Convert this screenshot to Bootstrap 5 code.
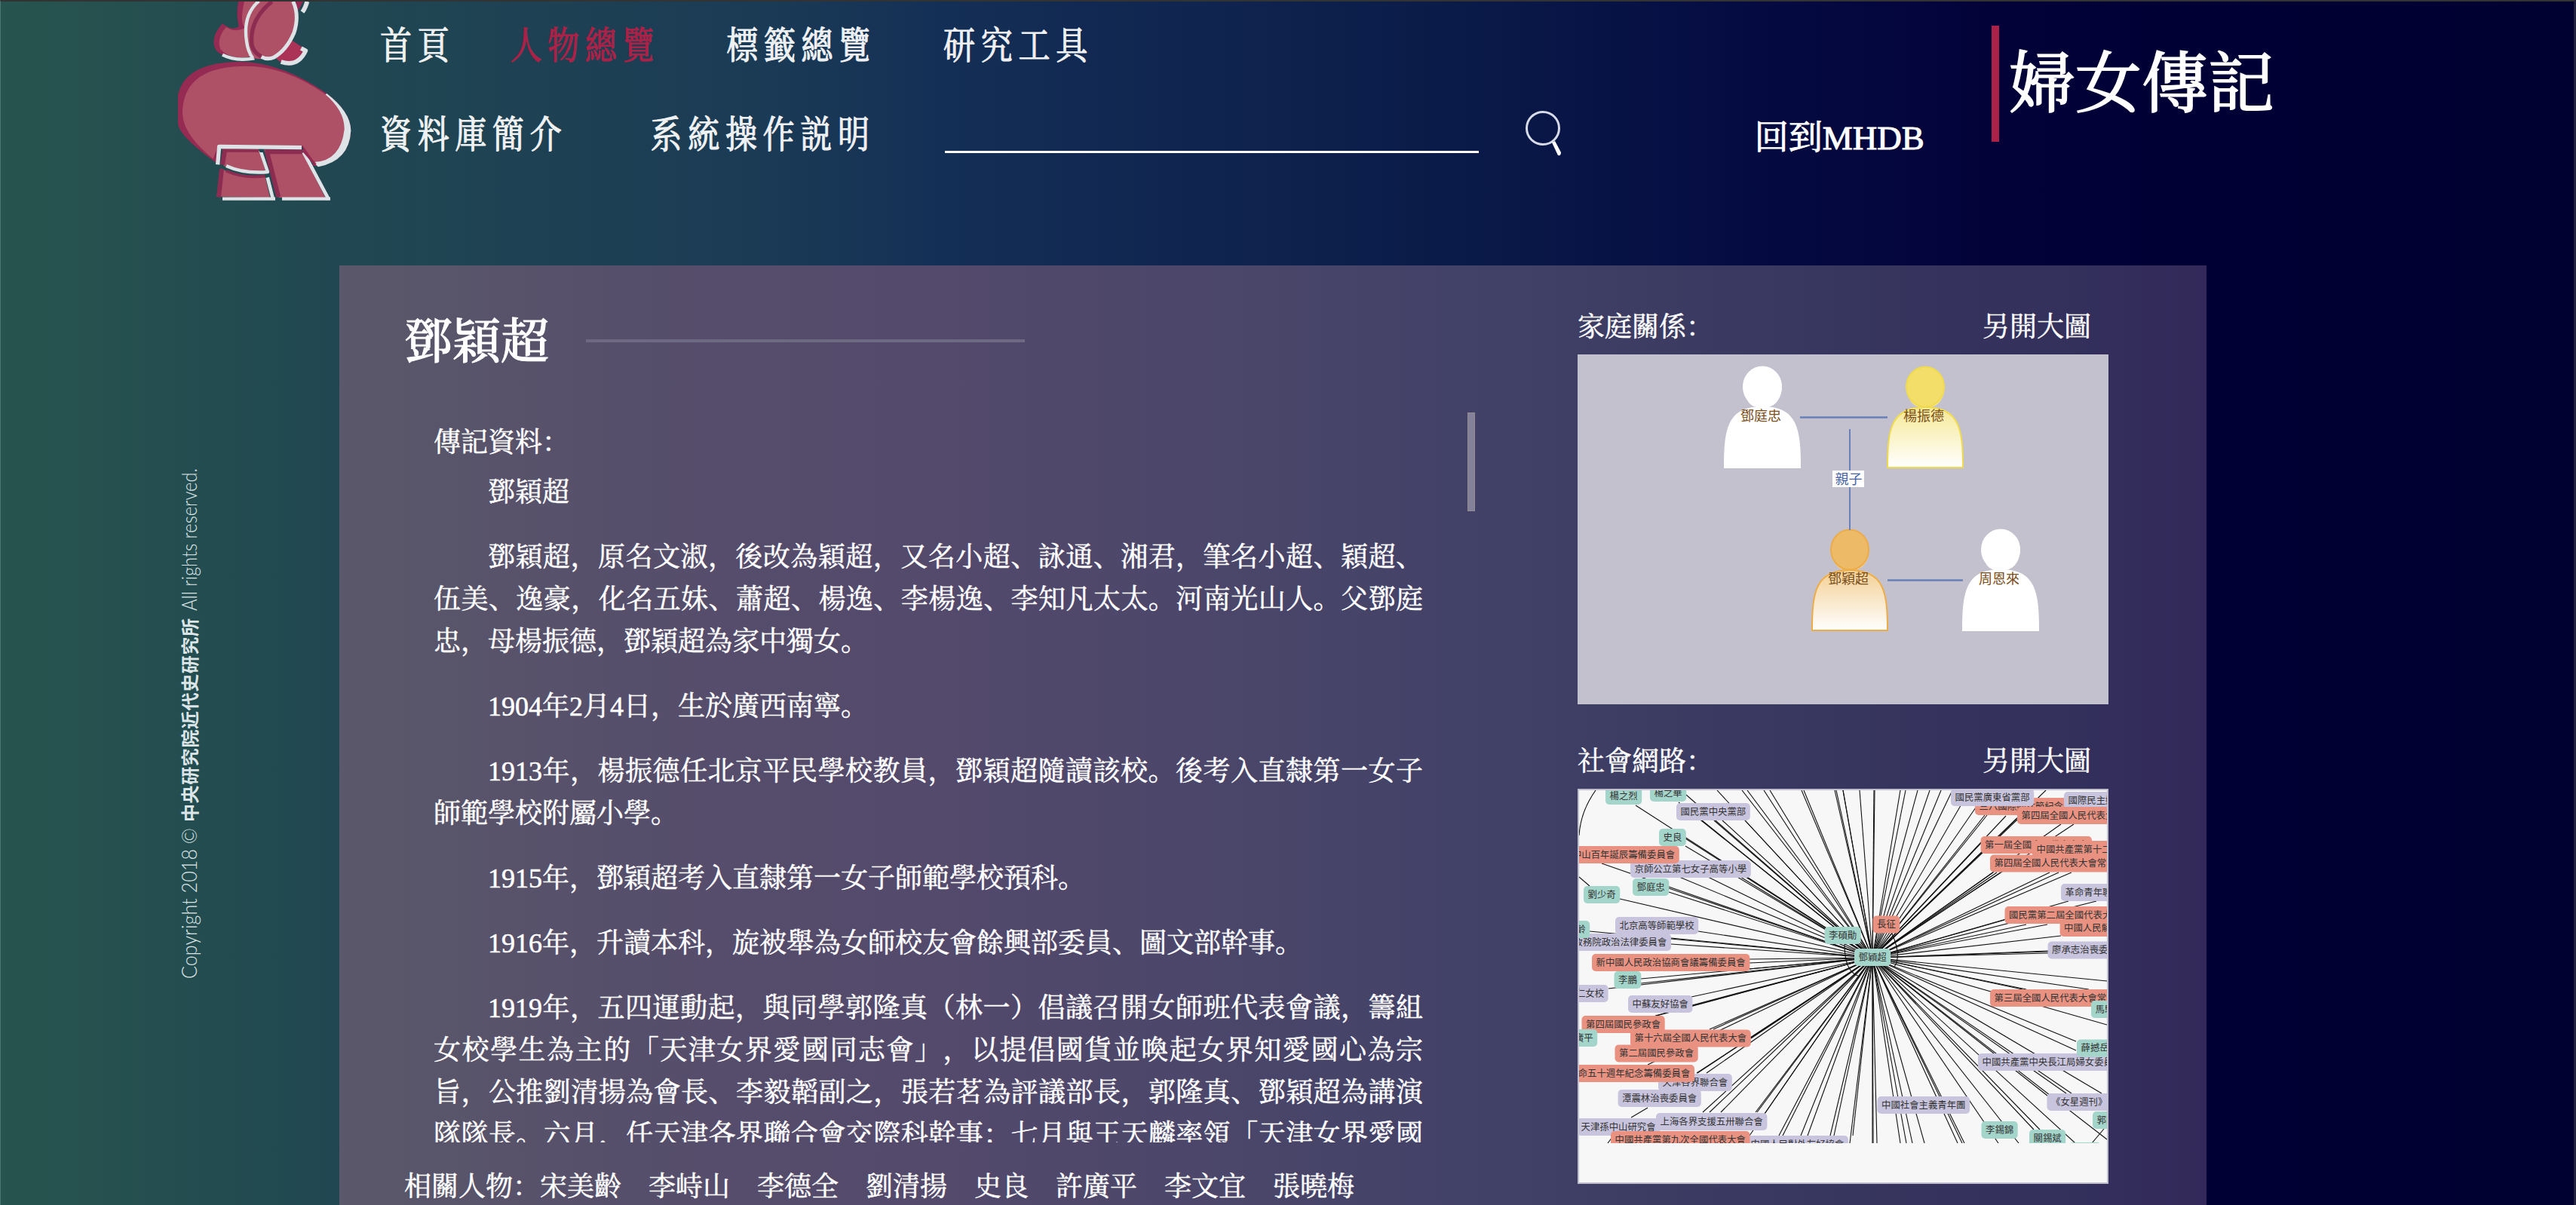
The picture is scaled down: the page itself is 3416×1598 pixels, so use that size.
<!doctype html>
<html lang="zh-Hans">
<head>
  <meta charset="UTF-8">
  <meta content="width=device-width, initial-scale=1" name="viewport">
  <link href="https://cdn.jsdelivr.net/npm/bootstrap@5.3.0/dist/css/bootstrap.min.css" rel="stylesheet">
  <script src="https://cdn.jsdelivr.net/npm/bootstrap@5.3.0/dist/js/bootstrap.bundle.min.js"></script>
  <title>婦女傳記 - 鄧穎超</title>
  <style>
    body {
      width: 3416px;
      height: 1598px;
      font-family: "Liberation Serif", "Noto Serif CJK SC", "Noto Sans CJK SC", serif;
      font-size: 36px;
      line-height: 56px;
      color: #fff;
      -webkit-text-stroke: .5px;
      text-spacing-trim: space-all;
      background: linear-gradient(90deg, #27544e 0, #204652 500px, #1b3b55 1000px, #142f56 1250px, #102650 1550px, #0a1a48 1950px, #050c42 2300px, #020138 2680px, #000030 3416px);
      border-top: 2px solid #333;
      border-left: 1px solid #4d7673;
      border-right: 3px solid #23233f;
    }
    a { color: inherit; text-decoration: none; }
    .site-header { height: 350px; }
    .site-logo { width: 300px; height: 288px; margin-left: 199px; }
    .menu-row { height: 72px; }
    .menu-row .nav-link {
      padding: 0;
      font-size: 42px;
      letter-spacing: 7.7px;
      color: #fff;
      opacity: .93;
      transform: scaleY(1.2);
      -webkit-text-stroke: 1px;
    }
    .menu-row .nav-link.active { color: #ab2147; opacity: 1; }
    .search-box {
      width: 708px;
      height: 48px;
      background: none;
      border: 0;
      border-bottom: 3px solid #fff;
      border-radius: 0;
    }
    .mhdb-link { font-size: 45px; -webkit-text-stroke: 1px; }
    .brand-name {
      height: 154px;
      margin-top: 32px;
      border-left: 10px solid #ab2147;
      padding-left: 13px;
      font-size: 88px;
      line-height: 156px;
      -webkit-text-stroke: 1.8px;
    }
    .side-rail { width: 449px; }
    .panel-main {
      width: 2476px;
      height: 1246px;
      background: linear-gradient(90deg, #5a586a 0, #564f6b 380px, #544a6c 750px, #4a466a 1200px, #3f3f66 1620px, #38375f 1950px, #33305c 2300px, #33295a 2476px);
    }
    .person-name { font-size: 64px; line-height: 96px; padding-top: 4px; -webkit-text-stroke: 1px; }
    .name-rule { width: 582px; height: 4px; background: #6f6a84; }
    .bio-scroll { height: 968px; width: 1381px; }
    .bio-text { width: 1312px; text-align: justify; }
    .bio-text p { text-indent: 2em; margin-bottom: 30px; }
    .bio-thumb { width: 10px; height: 131px; background: #84829a; border: 1px solid #938d90; }
    .graph-col { width: 704px; }
    .graph-title { padding-right: 23px; height: 60px; line-height: 66px; }
    .family-box { height: 464px; background: #c4c1cf; }
    .network-box { height: 524px; background: #f7f7f7; border: 2px solid #c1bfcd; }
    svg text { font-family: "Noto Sans CJK TC", sans-serif; -webkit-text-stroke: 0; }
    .copyright-latin { font-family: Lato, sans-serif; font-size: 28px; font-weight: 300; }
  </style>
</head>
<body class="overflow-hidden">
  <header class="site-header d-flex align-items-start">
    <!-- Logo -->
    <svg class="site-logo flex-shrink-0" viewBox="0 6 900 864">
      <g stroke-linejoin="round">
        <path d="M348 6Q338 60 350 105Q325 125 285 94Q250 130 250 170Q252 205 285 218L395 215L440 6Z" fill="#952b52"/>
        <path d="M372 6Q352 90 375 110Q340 132 300 108Q262 150 276 195Q300 224 350 230L410 225L470 6Z" fill="#ae5066"/>
        <path d="M285 218Q335 245 412 232" fill="none" stroke="#dde3e6" stroke-width="13"/>
        <path d="M560 160L618 198Q590 262 545 260Q515 250 498 232Z" fill="#ab3358"/>
        <path d="M598 192L616 202Q585 268 518 246" fill="none" stroke="#dde3e6" stroke-width="17"/>
        <path d="M575 6L606 6L586 42Z" fill="#952b52"/>
        <path d="M622 6Q614 34 603 48" fill="none" stroke="#dde3e6" stroke-width="18"/>
        <path d="M432 6Q356 80 386 185Q398 218 410 232Q455 240 500 225Q560 180 580 90Q583 40 570 6Z" fill="#ae5066"/>
        <path d="M482 6Q390 80 402 180Q410 210 440 225" fill="none" stroke="#8d2c51" stroke-width="16"/>
        <path d="M430 4Q365 60 381 165Q386 205 406 232" fill="none" stroke="#dde3e6" stroke-width="13"/>
        <path d="M566 6Q592 60 570 130Q540 200 490 228Q465 240 440 226" fill="none" stroke="#dde3e6" stroke-width="15"/>
        <path d="M108 375Q140 245 360 246Q520 248 700 372Q795 445 796 520Q790 640 666 660L270 655Q108 540 108 490Z" fill="#952b52"/>
        <path d="M700 372Q795 445 796 520Q790 640 666 664L640 640L690 380Z" fill="#dde3e6"/>
        <path d="M126 440Q135 265 370 263Q530 260 690 372Q772 440 770 515Q755 640 650 645L605 580L268 578L248 632Q120 530 126 440Z" fill="#ae5066"/>
        <path d="M272 583H600L650 655H262Z" fill="#21474f"/>
        <path d="M284 592L430 592L455 678Q370 695 290 660Z" fill="#ae5066"/>
        <path d="M280 670L262 782L474 786L455 705Q350 712 280 670Z" fill="#ae5066"/>
        <path d="M295 594L285 655M282 672L270 784" stroke="#8d2c51" stroke-width="18"/>
        <path d="M288 600L430 600M300 680Q370 712 455 700" fill="none" stroke="#8d2c51" stroke-width="11"/>
        <path d="M300 660Q370 692 465 684L436 598" fill="none" stroke="#dde3e6" stroke-width="13"/>
        <path d="M450 595L600 600L695 788L510 786Z" fill="#ae5066"/>
        <path d="M455 604H602M461 600L508 784" fill="none" stroke="#8d2c51" stroke-width="18"/>
        <path d="M464 706L486 792M608 606L708 794" stroke="#dde3e6" stroke-width="14"/>
        <path d="M604 596L655 655" stroke="#952b52" stroke-width="10"/>
        <path d="M266 655L272 583L600 587" fill="none" stroke="#dde3e6" stroke-width="16"/>
        <path d="M285 791H495M522 791H714" stroke="#dde3e6" stroke-width="13"/>
        <path d="M428 594H450L446 606H434Z" fill="#21434e"/>
      </g>
    </svg>
    <!-- Navigation -->
    <div class="d-flex flex-column ms-1" style="width: 2137px; padding-top: 19px">
      <nav class="menu-row nav d-flex align-items-center flex-nowrap mt-1">
        <a class="nav-link" href="#" style="margin-right: 73px">首頁</a>
        <a class="nav-link active" href="#" style="margin-right: 88px">人物總覽</a>
        <a class="nav-link" href="#" style="margin-right: 89px">標籤總覽</a>
        <a class="nav-link" href="#">研究工具</a>
      </nav>
      <div class="menu-row nav d-flex align-items-center flex-nowrap" style="margin-top: 46px">
        <a class="nav-link" href="#" style="margin-right: 110px">資料庫簡介</a>
        <a class="nav-link" href="#" style="margin-right: 92px">系統操作説明</a>
        <input class="search-box form-control p-0 flex-shrink-0" type="text" aria-label="搜尋">
        <svg width="50" height="64" viewBox="0 0 50 64" style="margin-left: 61px; margin-right: 255px; margin-bottom: 3px">
          <ellipse cx="24" cy="24" rx="21.5" ry="21.5" fill="none" stroke="#d8dce8" stroke-width="3"/>
          <path d="M36 43L40 41L48 56Q48 61 44 60Z" fill="#fff"/>
        </svg>
        <a class="mhdb-link text-nowrap pt-2" href="/">回到MHDB</a>
      </div>
    </div>
    <div class="brand-name text-nowrap"><a href="#">婦女傳記</a></div>
  </header>

  <div class="d-flex">
    <!-- Copyright -->
    <aside class="side-rail flex-shrink-0">
      <svg width="449" height="1246" viewBox="0 0 449 1246" fill="#dbe4e6">
        <g transform="translate(260 946) rotate(-90)">
          <text class="copyright-latin" x="0" y="0" textLength="200" lengthAdjust="spacingAndGlyphs">Copyright 2018 ©</text>
          <text x="208" y="0" font-size="24" font-weight="700" textLength="270" lengthAdjust="spacing">中央研究院近代史研究所</text>
          <text class="copyright-latin" x="488" y="0" textLength="189" lengthAdjust="spacingAndGlyphs">All rights reserved.</text>
        </g>
      </svg>
    </aside>

    <main class="panel-main d-flex flex-shrink-0">
      <!-- Biography -->
      <section style="width: 1642px; padding: 50px 0 0 86px">
        <div class="d-flex align-items-center" style="gap: 49px">
          <h1 class="person-name m-0">鄧穎超</h1>
          <div class="name-rule"></div>
        </div>
        <div class="bio-scroll d-flex justify-content-between overflow-hidden" style="margin: 45px 0 0 39px">
          <div class="bio-text" style="padding-top: 12px">
            <div style="margin-bottom: 10px">傳記資料：</div>
            <p>鄧穎超</p>
            <p>鄧穎超，原名文淑，後改為穎超，又名小超、詠通、湘君，筆名小超、穎超、伍美、逸豪，化名五妹、蕭超、楊逸、李楊逸、李知凡太太。河南光山人。父鄧庭忠，母楊振德，鄧穎超為家中獨女。</p>
            <p>1904年2月4日，生於廣西南寧。</p>
            <p>1913年，楊振德任北京平民學校教員，鄧穎超隨讀該校。後考入直隸第一女子師範學校附屬小學。</p>
            <p>1915年，鄧穎超考入直隸第一女子師範學校預科。</p>
            <p>1916年，升讀本科，旋被舉為女師校友會餘興部委員、圖文部幹事。</p>
            <p>1919年，五四運動起，與同學郭隆真（林一）倡議召開女師班代表會議，籌組女校學生為主的「天津女界愛國同志會」，以提倡國貨並喚起女界知愛國心為宗旨，公推劉清揚為會長、李毅韜副之，張若茗為評議部長，郭隆真、鄧穎超為講演隊隊長。六月，任天津各界聯合會交際科幹事；七月與王天麟率領「天津女界愛國同志會」</p>
          </div>
          <div class="bio-thumb"></div>
        </div>
        <div class="text-nowrap" style="margin-top: 31px">相關人物：宋美齡　李峙山　李德全　劉清揚　史良　許廣平　李文宜　張曉梅</div>
      </section>

      <!-- Graphs -->
      <section class="graph-col" style="padding-top: 49px">
        <div class="graph-title d-flex justify-content-between"><span>家庭關係：</span><a href="#">另開大圖</a></div>
        <div class="family-box" style="margin-top: 9px">
          <svg class="d-block" width="704" height="464" viewBox="0 0 704 464">
            <defs>
              <linearGradient id="gradYellow" x1="0" y1="0" x2="0" y2="1"><stop offset="0" stop-color="#f0da50"/><stop offset="1" stop-color="#fff"/></linearGradient>
              <linearGradient id="gradOrange" x1="0" y1="0" x2="0" y2="1"><stop offset="0" stop-color="#ecb04c"/><stop offset="1" stop-color="#fff"/></linearGradient>
            </defs>
            <g id="family"></g>
          </svg>
        </div>
        <div class="graph-title d-flex justify-content-between" style="margin-top: 43px"><span>社會網路：</span><a href="#">另開大圖</a></div>
        <div class="network-box" style="margin-top: 9px">
          <svg class="d-block overflow-hidden" width="700" height="468" viewBox="0 0 700 468">
            <g id="edges" stroke="#111" stroke-width="1.1" fill="none"></g>
            <g id="nodes"></g>
          </svg>
        </div>
      </section>
    </main>
  </div>

  <script>
    // Family tree: name, centre x, top y, fill, outline
    const people = [
      ["鄧庭忠", 245, 16, "#fff", "#fff"],
      ["楊振德", 461, 16, "url(#gradYellow)", "#f0da50"],
      ["鄧穎超", 361, 232, "url(#gradOrange)", "#ecac48"],
      ["周恩來", 561, 232, "#fff", "#fff"]
    ];
    let family = '<path d="M295 83.5H411M411 299.5H511" stroke="#6a80b8" stroke-width="2.5"/>';
    for (const [name, x, y, fill, line] of people) {
      family += `<path d="M${x - 8} ${y + 54}C${x - 32} ${y + 49} ${x - 25} ${y + 1} ${x} ${y + 1}C${x + 34} ${y + 1} ${x + 32} ${y + 49} ${x + 8} ${y + 54}C${x + 46} ${y + 56} ${x + 50} ${y + 84} ${x + 50} ${y + 134}H${x - 50}C${x - 50} ${y + 84} ${x - 46} ${y + 56} ${x - 8} ${y + 54}Z" fill="${fill}"/>
        <path d="M${x - 50} ${y + 134}C${x - 50} ${y + 84} ${x - 46} ${y + 54} ${x} ${y + 54}S${x + 50} ${y + 84} ${x + 50} ${y + 134}Z" fill="none" stroke="${line}" stroke-width="2"/>
        <ellipse cx="${x}" cy="${y + 27}" rx="25" ry="26.5" fill="${name === '楊振德' ? '#f2de68' : name === '鄧穎超' ? '#edba68' : '#fff'}" stroke="${line}" stroke-width="2"/>
        <text x="${x - 2}" y="${y + 72}" font-size="18" text-anchor="middle" fill="#7a4e18">${name}</text>`;
    }
    family += '<path d="M361 99V233" stroke="#6a80b8" stroke-width="2"/><rect x="338" y="154" width="42" height="22" fill="#fff"/><text x="359.500" y="172" font-size="18" text-anchor="middle" fill="#4760a0">親子</text>';
    document.getElementById("family").innerHTML = family;

    // Network edges, all start at the centre node
    const cx = 389, cy = 222;
    const ends = [
      [183,0],[216,0],[223,0],[245,0],[253,0],[295,0],[298,0],[339,0],[341,0],[350,0],[350,0],[372,0],[391,0],[392,0],
      [426,0],[433,0],[449,0],[465,0],[480,0],[495,0],[512,10],[528,20],[538,33],[541,33],[566,34],[619,0],[581,39],[580,38],[533,70],[534,82],
      [639,45],[656,45],[549,109],[554,109],[559,109],[624,109],[636,109],[653,109],[649,147],[686,147],[564,172],[593,178],[621,178],[639,193],[622,213],[622,214],[622,216],
      [700,253],[676,264],[593,264],[588,264],[700,311],[659,333],[659,345],[693,402],[653,402],[646,402],[621,405],[700,463],[658,468],[611,450],[603,450],[583,468],[556,468],
      [511,468],[508,468],[502,468],[458,468],[442,468],[434,468],[426,468],[395,468],[390,468],[389,468],[363,458],[359,468],
      [333,458],[338,458],[294,458],[303,458],[265,458],[270,458],[226,458],[234,427],[236,427],[246,429],[188,427],[173,427],[164,427],[169,375],[156,375],[157,375],[91,364],
      [173,317],[178,317],[228,329],[227,328],[101,299],[103,299],[149,274],[150,285],[39,263],[82,250],[82,256],[226,237],[226,224],[226,229],[122,196],[122,204],[158,187],[14,187],
      [54,144],[119,130],[119,135],[30,97],[133,115],[171,115],[214,115],[141,64],[141,74],[75,20],[142,6],[132,16],[163,40],[179,40],[190,40],[220,40]
    ];
    let edges = "";
    for (const [x, y] of ends) {
      edges += `<path d="M${cx} ${cy}L${x} ${y}"/>`;
    }
    edges += '<path d="M22 0Q2 28 0 60M0 115L14 127M69 434L91 421M38 468L44 460M680 468L696 449M352 204Q352 240 370 246M415 190Q428 220 418 234"/>';
    document.getElementById("edges").innerHTML = edges;

    // Network labels: g = person, p = organisation, r = event
    const colors = { g: "#a3d5cb", p: "#c8c4de", r: "#ea9281" };
    const nodes = [
      ["楊之烈","g",35,-4],["楊之華","g",94,-8],["國民黨中央黨部","p",129,17],["史良","g",106,51],
      ["京師公立第七女子高等小學","p",68,93],["孫中山百年誕辰籌備委員會","r",-27,74],["鄧庭忠","g",71,117],["劉少奇","g",6,127],
      ["政務院政治法律委員會","p",-13,190],["北京高等師範學校","p",48,168],["宋美齡","g",-34,173],
      ["新中國人民政治協商會議籌備委員會","r",17,217],["李鵬","g",46.5,240],["懷仁女校","p",-22,258],["中蘇友好協會","p",65,272],
      ["第四屆國民參政會","r",3.5,299],["許廣平","g",-24,317],["第十六屆全國人民代表大會","r",68,317.5],["第二屆國民參政會","r",47.5,337.5],
      ["天津各界聯合會","p",105,376],["辛亥革命五十週年紀念籌備委員會","r",-44,364],["潭震林治喪委員會","p",51.6,397],
      ["天津孫中山研究會","p",-3,435],["上海各界支援五卅聯合會","p",102,428],["中國人民對外友好協會","p",222,458],["中國共產黨第九次全國代表大會","r",42,452],
      ["三八國際婦女節紀念會","r",525,10],["國民黨廣東省黨部","p",493,-2],["國際民主婦女聯合會","p",643,2],["第四屆全國人民代表大會","r",581,22],
      ["第一屆全國人民代表大會","r",532.6,61],["中國共產黨第十二次全國代表大會","r",601,67],["第四屆全國人民代表大會常務委員會","r",545,85.5],
      ["革命青年聯合會","p",639,124],["中國人民解放軍","r",637.6,171],["國民黨第二屆全國代表大會","r",564.5,154],["廖承志治喪委員會","p",621.6,200.5],
      ["長征","r",389.5,166.5],["李碩勛","g",325.5,181],["鄧穎超","g",365,210],
      ["第三屆全國人民代表大會常務委員會","r",545,264],["馬駿","g",679,279],["中國共產黨中央長江局婦女委員會","p",529,349],["薛撼岳","g",660,330.5],
      ["《女星週刊》","p",620.5,402],["郭隆真","g",681,426],["中國社會主義青年團","p",395.5,406],["李錫錦","g",533.5,439],["關錫斌","g",597,450],["","g",650,467]
    ];
    let labels = "";
    for (const [name, kind, x, y] of nodes) {
      const w = (name.length || 2.5) * 12.4 + 11;
      labels += `<rect x="${x}" y="${y}" width="${w}" height="23" rx="5" fill="${colors[kind]}"/><text x="${x + 5.5}" y="${y + 15.8}" font-size="12.4" fill="#333">${name}</text>`;
    }
    document.getElementById("nodes").innerHTML = labels;
  </script>
</body>
</html>
